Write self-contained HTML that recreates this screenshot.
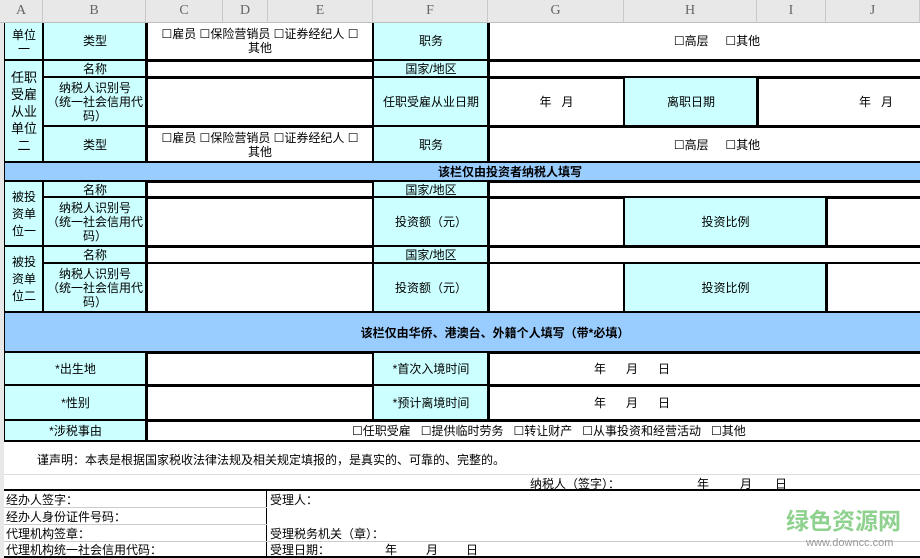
<!DOCTYPE html>
<html><head><meta charset="utf-8"><style>
*{margin:0;padding:0;box-sizing:border-box}
body{width:920px;height:558px;overflow:hidden;background:#fff;position:relative;font-family:"Liberation Sans","Noto Sans CJK SC",sans-serif;font-size:12px;color:#000}
.c{position:absolute;display:flex;align-items:center;justify-content:center;text-align:center;line-height:14px;overflow:hidden;border:2px solid #000}
.cy{background:#ccffff}.bl{background:#99ccff;font-weight:bold}
.h{position:absolute;z-index:5;top:0;height:23px;background:#e8e8e8;border-right:1px solid #c8c8c8;border-bottom:1px solid #bdbdbd;font-family:"Liberation Serif",serif;font-size:14px;color:#666;display:flex;align-items:center;justify-content:center}
.t{position:absolute;white-space:nowrap;line-height:14px}
.ln{position:absolute;background:#000}
</style></head><body>
<div class="h" style="left:0;width:43px">A</div>
<div class="h" style="left:43px;width:103px">B</div>
<div class="h" style="left:146px;width:77px">C</div>
<div class="h" style="left:223px;width:45px">D</div>
<div class="h" style="left:268px;width:105px">E</div>
<div class="h" style="left:373px;width:115px">F</div>
<div class="h" style="left:488px;width:136px">G</div>
<div class="h" style="left:624px;width:133px">H</div>
<div class="h" style="left:757px;width:69px">I</div>
<div class="h" style="left:826px;width:94px">J</div>
<div style="position:absolute;z-index:4;left:0;top:23px;width:4px;height:535px;background:#e8e8e8"></div>

<!-- block 1 -->
<div class="c cy" style="left:3px;top:10px;width:42px;height:52px;align-items:flex-end;padding-bottom:4px">单位<br>一</div>
<div class="c cy" style="left:42px;top:22px;width:106px;height:40px;border-top:none">类型</div>
<div class="c" style="left:145px;top:22px;width:230px;height:40px;border-top:none">☐雇员 ☐保险营销员 ☐证券经纪人 ☐<br>其他</div>
<div class="c cy" style="left:372px;top:22px;width:118px;height:40px;border-top:none">职务</div>
<div class="c" style="left:487px;top:22px;width:440px;height:40px;padding-left:20px;border-top:none">☐高层&nbsp;&nbsp;&nbsp;&nbsp;&nbsp;☐其他</div>

<!-- block 2 -->
<div class="c cy" style="left:3px;top:59px;width:42px;height:105px;font-size:13px;line-height:17px">任职<br>受雇<br>从业<br>单位<br>二</div>
<div class="c cy" style="left:42px;top:59px;width:106px;height:20px">名称</div>
<div class="c cy" style="left:42px;top:76px;width:106px;height:52px">纳税人识别号<br>（统一社会信用代<br>码）</div>
<div class="c cy" style="left:42px;top:125px;width:106px;height:39px">类型</div>
<div class="c" style="left:145px;top:59px;width:230px;height:20px"></div>
<div class="c" style="left:145px;top:76px;width:230px;height:52px"></div>
<div class="c" style="left:145px;top:125px;width:230px;height:39px">☐雇员 ☐保险营销员 ☐证券经纪人 ☐<br>其他</div>
<div class="c cy" style="left:372px;top:59px;width:118px;height:20px">国家/地区</div>
<div class="c cy" style="left:372px;top:76px;width:118px;height:52px">任职受雇从业日期</div>
<div class="c cy" style="left:372px;top:125px;width:118px;height:39px">职务</div>
<div class="c" style="left:487px;top:59px;width:440px;height:20px"></div>
<div class="c" style="left:487px;top:76px;width:139px;height:52px">年&nbsp;&nbsp;&nbsp;月</div>
<div class="c cy" style="left:623px;top:76px;width:136px;height:52px">离职日期</div>
<div class="c" style="left:756px;top:76px;width:170px;height:52px;padding-left:70px">年&nbsp;&nbsp;&nbsp;月</div>
<div class="c" style="left:487px;top:125px;width:440px;height:39px;padding-left:20px">☐高层&nbsp;&nbsp;&nbsp;&nbsp;&nbsp;☐其他</div>

<div class="c bl" style="left:3px;top:161px;width:924px;height:22px;padding-left:90px">该栏仅由投资者纳税人填写</div>

<!-- invest 1 -->
<div class="c cy" style="left:3px;top:180px;width:42px;height:68px;line-height:17px">被投<br>资单<br>位一</div>
<div class="c cy" style="left:42px;top:180px;width:106px;height:19px">名称</div>
<div class="c cy" style="left:42px;top:196px;width:106px;height:52px">纳税人识别号<br>（统一社会信用代<br>码）</div>
<div class="c" style="left:145px;top:180px;width:230px;height:19px"></div>
<div class="c" style="left:145px;top:196px;width:230px;height:52px"></div>
<div class="c cy" style="left:372px;top:180px;width:118px;height:19px">国家/地区</div>
<div class="c cy" style="left:372px;top:196px;width:118px;height:52px">投资额（元）</div>
<div class="c" style="left:487px;top:180px;width:440px;height:19px"></div>
<div class="c" style="left:487px;top:196px;width:139px;height:52px"></div>
<div class="c cy" style="left:623px;top:196px;width:205px;height:52px">投资比例</div>
<div class="c" style="left:825px;top:196px;width:102px;height:52px"></div>

<!-- invest 2 -->
<div class="c cy" style="left:3px;top:245px;width:42px;height:69px;line-height:17px">被投<br>资单<br>位二</div>
<div class="c cy" style="left:42px;top:245px;width:106px;height:19px">名称</div>
<div class="c cy" style="left:42px;top:262px;width:106px;height:52px">纳税人识别号<br>（统一社会信用代<br>码）</div>
<div class="c" style="left:145px;top:245px;width:230px;height:19px"></div>
<div class="c" style="left:145px;top:262px;width:230px;height:52px"></div>
<div class="c cy" style="left:372px;top:245px;width:118px;height:19px">国家/地区</div>
<div class="c cy" style="left:372px;top:262px;width:118px;height:52px">投资额（元）</div>
<div class="c" style="left:487px;top:245px;width:440px;height:19px"></div>
<div class="c" style="left:487px;top:262px;width:139px;height:52px"></div>
<div class="c cy" style="left:623px;top:262px;width:205px;height:52px">投资比例</div>
<div class="c" style="left:825px;top:262px;width:102px;height:52px"></div>

<div class="c bl" style="left:3px;top:311px;width:924px;height:43px;padding-left:60px">该栏仅由华侨、港澳台、外籍个人填写（带*必填）</div>

<div class="c cy" style="left:3px;top:351px;width:145px;height:36px">*出生地</div>
<div class="c" style="left:145px;top:351px;width:230px;height:36px"></div>
<div class="c cy" style="left:372px;top:351px;width:118px;height:36px">*首次入境时间</div>
<div class="c" style="left:487px;top:351px;width:440px;height:36px;justify-content:flex-start;padding-left:105px">年&nbsp;&nbsp;&nbsp;&nbsp;&nbsp;&nbsp;月&nbsp;&nbsp;&nbsp;&nbsp;&nbsp;&nbsp;日</div>
<div class="c cy" style="left:3px;top:384px;width:145px;height:38px">*性别</div>
<div class="c" style="left:145px;top:384px;width:230px;height:38px"></div>
<div class="c cy" style="left:372px;top:384px;width:118px;height:38px">*预计离境时间</div>
<div class="c" style="left:487px;top:384px;width:440px;height:38px;justify-content:flex-start;padding-left:105px">年&nbsp;&nbsp;&nbsp;&nbsp;&nbsp;&nbsp;月&nbsp;&nbsp;&nbsp;&nbsp;&nbsp;&nbsp;日</div>
<div class="c cy" style="left:3px;top:419px;width:145px;height:23px">*涉税事由</div>
<div class="c" style="left:145px;top:419px;width:782px;height:23px;justify-content:flex-start;padding-left:205px">☐任职受雇&nbsp;&nbsp;&nbsp;☐提供临时劳务&nbsp;&nbsp;&nbsp;☐转让财产&nbsp;&nbsp;&nbsp;☐从事投资和经营活动&nbsp;&nbsp;&nbsp;☐其他</div>

<div class="t" style="left:37px;top:453px">谨声明：本表是根据国家税收法律法规及相关规定填报的，是真实的、可靠的、完整的。</div>
<div class="t" style="left:530px;top:477px">纳税人（签字）：</div>
<div class="t" style="left:697px;top:477px">年</div>
<div class="t" style="left:740px;top:477px">月</div>
<div class="t" style="left:775px;top:477px">日</div>
<div style="position:absolute;left:4px;top:474px;width:916px;height:1px;background:#ddd"></div>

<div class="ln" style="left:4px;top:489px;width:916px;height:2px"></div>
<div class="ln" style="left:4px;top:556px;width:916px;height:2px"></div>
<div class="ln" style="left:266px;top:490px;width:1px;height:67px"></div>
<div style="position:absolute;left:4px;top:507px;width:263px;height:1px;background:#ccc"></div>
<div style="position:absolute;left:4px;top:524px;width:263px;height:1px;background:#ccc"></div>
<div style="position:absolute;left:4px;top:541px;width:916px;height:1px;background:#ccc"></div>
<div class="t" style="left:6px;top:493px">经办人签字：</div>
<div class="t" style="left:6px;top:510px">经办人身份证件号码：</div>
<div class="t" style="left:6px;top:527px">代理机构签章：</div>
<div class="t" style="left:6px;top:543px">代理机构统一社会信用代码：</div>
<div class="t" style="left:270px;top:493px">受理人：</div>
<div class="t" style="left:270px;top:527px">受理税务机关（章）：</div>
<div class="t" style="left:270px;top:543px">受理日期：</div>
<div class="t" style="left:385px;top:543px">年</div>
<div class="t" style="left:426px;top:543px">月</div>
<div class="t" style="left:466px;top:543px">日</div>
<div class="t" style="left:786px;top:508px;font-size:23px;line-height:26px;color:#8fd18f;font-weight:bold">绿色资源网</div>
<div class="t" style="left:806px;top:536px;font-size:11px;color:#999">www.downcc.com</div>
</body></html>
